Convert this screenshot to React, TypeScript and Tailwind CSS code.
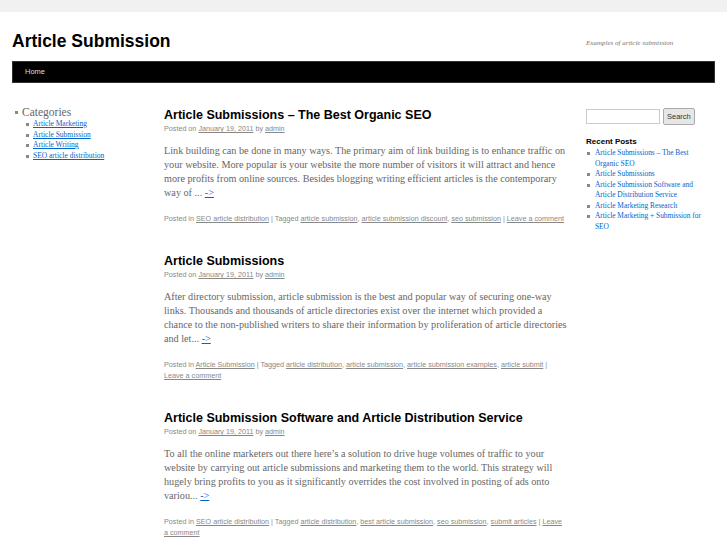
import React from "react";

interface Post {
  title: string;
  lines: string[];
  category: string;
  tags: string[];
}

// excerpt lines kept as in the original layout
const posts: Post[] = [
  {
    title: "Article Submissions – The Best Organic SEO",
    lines: [
      "Link building can be done in many ways. The primary aim of link building is to enhance traffic on",
      "your website. More popular is your website the more number of visitors it will attract and hence",
      "more profits from online sources. Besides blogging writing efficient articles is the contemporary",
      "way of ...",
    ],
    category: "SEO article distribution",
    tags: ["article submission", "article submission discount", "seo submission"],
  },
  {
    title: "Article Submissions",
    lines: [
      "After directory submission, article submission is the best and popular way of securing one-way",
      "links. Thousands and thousands of article directories exist over the internet which provided a",
      "chance to the non-published writers to share their information by proliferation of article directories",
      "and let...",
    ],
    category: "Article Submission",
    tags: ["article distribution", "article submission", "article submission examples", "article submit"],
  },
  {
    title: "Article Submission Software and Article Distribution Service",
    lines: [
      "To all the online marketers out there here’s a solution to drive huge volumes of traffic to your",
      "website by carrying out article submissions and marketing them to the world. This strategy will",
      "hugely bring profits to you as it significantly overrides the cost involved in posting of ads onto",
      "variou...",
    ],
    category: "SEO article distribution",
    tags: ["article distribution", "best article submission", "seo submission", "submit articles"],
  },
];

const categories = ["Article Marketing", "Article Submission", "Article Writing", "SEO article distribution"];

const recentPosts = [
  "Article Submissions – The Best Organic SEO",
  "Article Submissions",
  "Article Submission Software and Article Distribution Service",
  "Article Marketing Research",
  "Article Marketing + Submission for SEO",
];

const sans = "font-['Liberation_Sans',Arial,sans-serif]";
const serif = "font-['Liberation_Serif','Times_New_Roman',serif]";

const Bullet: React.FC = () => (
  <span className="mt-[4px] w-[3px] h-[3px] bg-[#888] shrink-0" />
);

const PostEntry: React.FC<{ post: Post }> = ({ post }) => (
  <div className="mb-[29px]">
    <h2 className={`${sans} text-[12.5px] leading-[16px] font-bold text-black`}>{post.title}</h2>
    <div className={`${sans} text-[7.2px] leading-[11px] text-[#888]`}>
      Posted on <a className="underline">January 19, 2011</a> by <a className="underline">admin</a>
    </div>
    <p className={`${serif} mt-[10px] text-[10.2px] leading-[14px] text-[#666] whitespace-nowrap`}>
      {post.lines.map((l, i) => (
        <React.Fragment key={i}>
          {l}
          {i < post.lines.length - 1 ? <br /> : null}
        </React.Fragment>
      ))}{" "}
      <a className="text-[#0066cc] underline">-&gt;</a>
    </p>
    <div className={`${sans} mt-[13px] text-[7.2px] leading-[11px] text-[#888]`}>
      Posted in <a className="underline">{post.category}</a> | Tagged{" "}
      {post.tags.map((t, i) => (
        <React.Fragment key={t}>
          <a className="underline">{t}</a>
          {i < post.tags.length - 1 ? ", " : " "}
        </React.Fragment>
      ))}
      | <a className="underline">Leave a comment</a>
    </div>
  </div>
);

const App: React.FC = () => {
  return (
    <div className="bg-[#f1f1f1] min-h-screen pt-[12px]">
      <div className="bg-white min-h-[533px] px-[12px]">
        {/* Header */}
        <header className="flex items-start justify-between pt-[18px]">
          <h1 className={`${sans} text-[17.5px] leading-[22px] font-bold text-black`}>Article Submission</h1>
          <div className={`${serif} italic text-[7px] leading-[10px] text-[#777] w-[129px] mt-[8px]`}>
            Examples of article submission
          </div>
        </header>
        <nav className="mt-[9px] h-[22px] bg-black flex items-center border border-[#333]">
          <a className={`${sans} ml-[12px] text-[7.5px] text-[#ddd]`}>Home</a>
        </nav>

        {/* Body */}
        <div className="flex mt-[23px]">
          <aside className="w-[152px] shrink-0 pl-[3px]">
            <div className="flex items-start gap-[4px]">
              <span className="mt-[5px] w-[3px] h-[3px] bg-[#888] shrink-0" />
              <div>
                <div className={`${serif} text-[11.5px] leading-[12px] text-[#666]`}>Categories</div>
                <ul className="mt-[1px]">
                  {categories.map((c) => (
                    <li key={c} className="flex items-start gap-[4px] pl-[4px]">
                      <Bullet />
                      <a className={`${serif} text-[7.5px] leading-[10.5px] text-[#0066cc] underline`}>{c}</a>
                    </li>
                  ))}
                </ul>
              </div>
            </div>
          </aside>

          <main className="w-[402px] shrink-0 mt-[1px]">
            {posts.map((p) => (
              <PostEntry key={p.title} post={p} />
            ))}
          </main>

          <aside className="ml-[20px] w-[129px] shrink-0 mt-[2px]">
            <div className="flex items-center gap-[3px]">
              <input className="w-[74px] h-[15px] border border-[#ccc] bg-white" />
              <button
                className={`${sans} h-[17px] px-[3px] text-[7.5px] text-[#333] bg-[#e6e6e6] border border-[#aaa] rounded-[2px]`}
              >
                Search
              </button>
            </div>
            <h3 className={`${sans} mt-[12px] text-[8px] leading-[10px] font-bold text-black`}>Recent Posts</h3>
            <ul className="mt-[1px] w-[119px]">
              {recentPosts.map((r) => (
                <li key={r} className="flex items-start gap-[5px] pl-[1px]">
                  <Bullet />
                  <a className={`${serif} text-[7.4px] leading-[10.5px] text-[#0066cc]`}>{r}</a>
                </li>
              ))}
            </ul>
          </aside>
        </div>
      </div>
    </div>
  );
};

export default App;
